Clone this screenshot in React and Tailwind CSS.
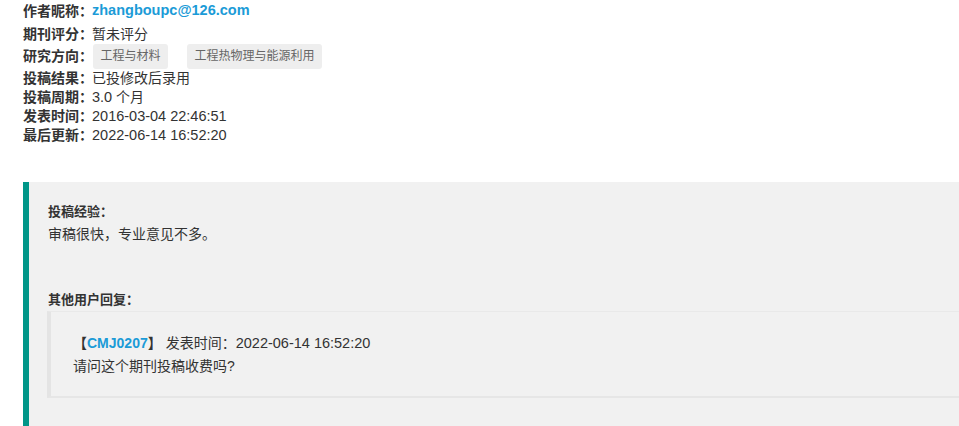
import React from "react";

const font = { fontFamily: '"Liberation Sans", "Noto Sans CJK SC", sans-serif' };

function Row({ label, children, className = "" }) {
  return (
    <div className={"flex items-center h-[19px] " + className}>
      <span className="font-bold text-[14px] text-[#333] w-[69px] shrink-0 whitespace-nowrap">{label}</span>
      <span className="text-[14px] text-[#333] whitespace-nowrap">{children}</span>
    </div>
  );
}

function Num({ children }) {
  return <span className="text-[14.5px]">{children}</span>;
}

export default function App() {
  return (
    <div style={font} className="w-[959px] h-[426px] overflow-hidden bg-white text-[#333]">
      <div className="pl-[23px] pt-px">
        <div className="flex items-center h-[20px] mb-[4px]">
          <span className="font-bold text-[14px] w-[69px] shrink-0 whitespace-nowrap">作者昵称：</span>
          <span className="font-bold text-[14.5px] text-[#1b9bd7]">zhangboupc@126.com</span>
        </div>
        <Row label="期刊评分：">暂未评分</Row>
        <div className="flex items-center h-[25px]">
          <span className="font-bold text-[14px] w-[69px] shrink-0 whitespace-nowrap">研究方向：</span>
          <div className="flex gap-[19px] ml-px">
            <span className="bg-[#eeeeee] text-[#666] text-[12px] h-[25px] leading-[25px] px-[7.5px] rounded-[3px]">工程与材料</span>
            <span className="bg-[#eeeeee] text-[#666] text-[12px] h-[25px] leading-[25px] px-[7.5px] rounded-[3px]">工程热物理与能源利用</span>
          </div>
        </div>
        <Row label="投稿结果：">已投修改后录用</Row>
        <Row label="投稿周期："><Num>3.0</Num> 个月</Row>
        <Row label="发表时间："><Num>2016-03-04 22:46:51</Num></Row>
        <Row label="最后更新："><Num>2022-06-14 16:52:20</Num></Row>
      </div>

      <div className="mt-[37px] ml-[23px] border-l-[6px] border-[#009688] bg-[#f1f1f1] pl-[19px] pt-[18px] pb-[40px]">
        <div className="font-bold text-[13px] leading-[23px]">投稿经验：</div>
        <div className="text-[14px] leading-[23px]">审稿很快，专业意见不多。</div>
        <div className="font-bold text-[13px] leading-[23px] mt-[42px]">其他用户回复：</div>
        <div className="border-l-4 border-l-[#e4e4e4] border-t border-t-[#e9e9e9] border-b-2 border-b-[#e6e6e6] -ml-px pl-[22px] pt-[20px] pb-[18px]">
          <div className="text-[14px] leading-[23px] whitespace-nowrap">
            <span className="font-bold">【</span>
            <span className="font-bold text-[#1b9bd7] text-[14px]">CMJ0207</span>
            <span className="font-bold">】</span>
            <span className="ml-[4px]">发表时间：</span>
            <Num>2022-06-14 16:52:20</Num>
          </div>
          <div className="text-[14px] leading-[23px]">请问这个期刊投稿收费吗?</div>
        </div>
      </div>
    </div>
  );
}
